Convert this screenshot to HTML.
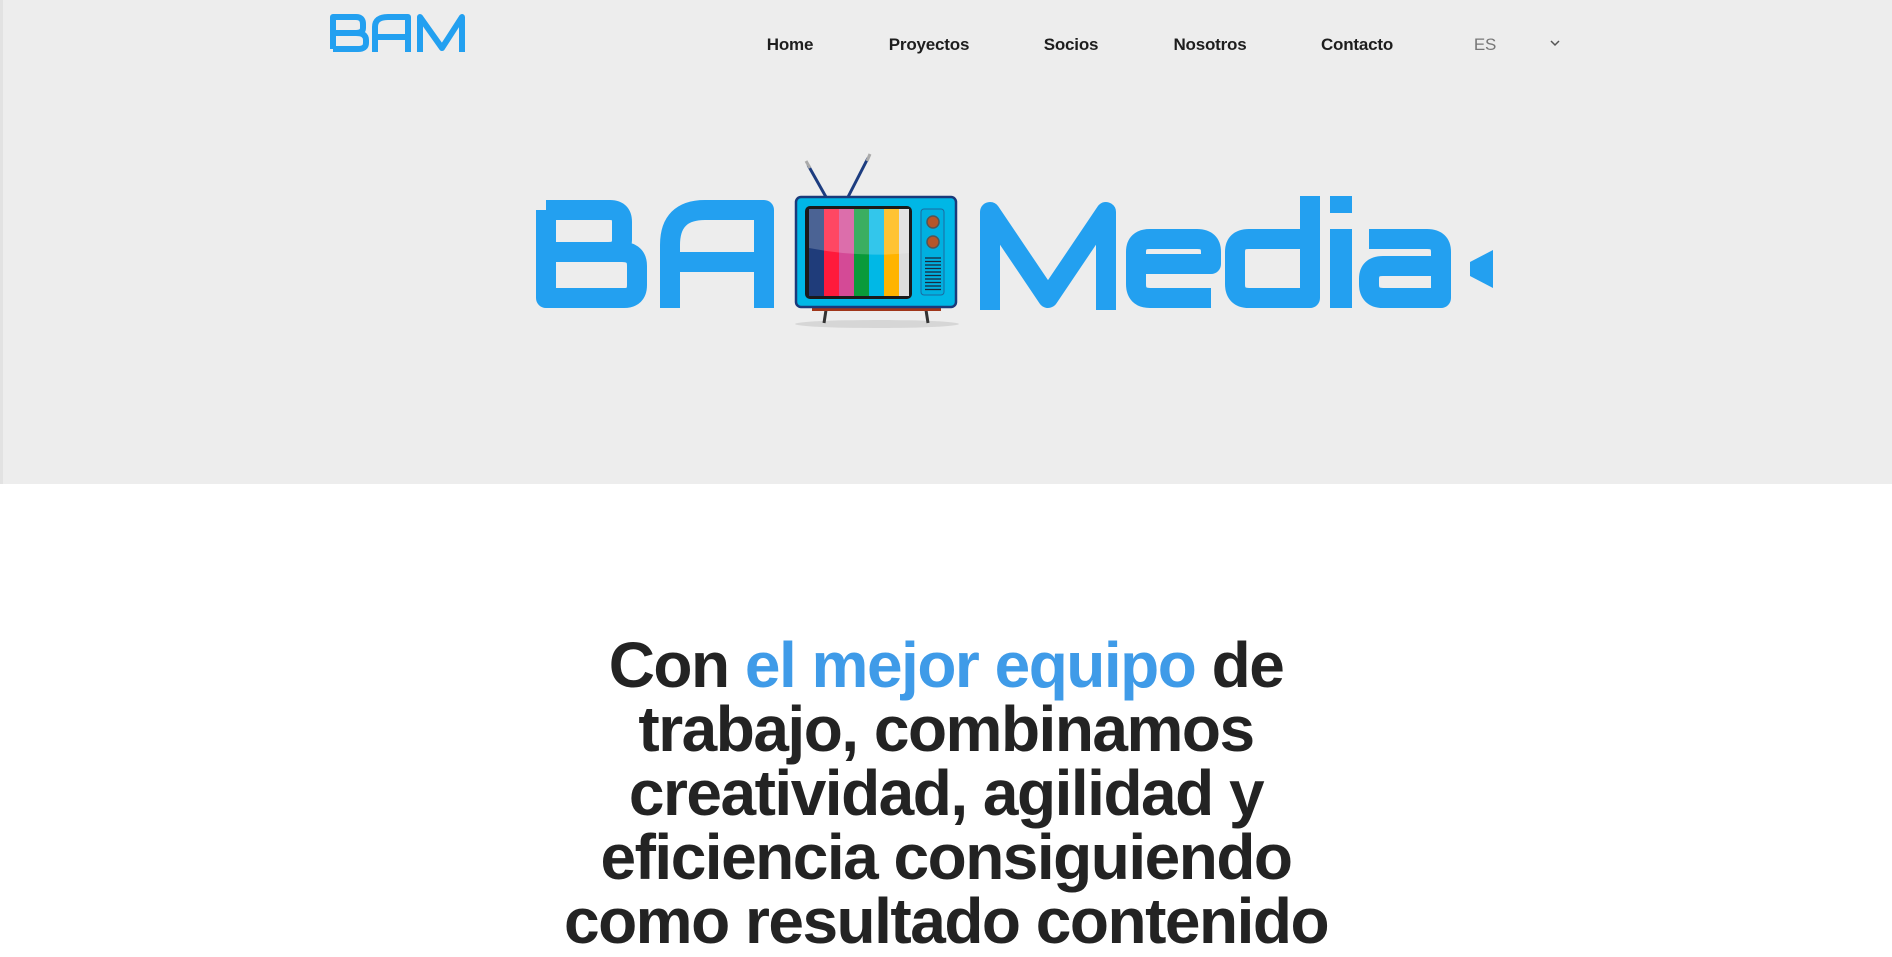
<!DOCTYPE html>
<html><head><meta charset="utf-8"><style>
html,body{margin:0;padding:0;width:1892px;height:951px;overflow:hidden;background:#fff;font-family:"Liberation Sans",sans-serif}
.hero{position:absolute;left:0;top:0;width:1892px;height:484px;background:#ededed;border-left:3px solid #e2e2e2;box-sizing:border-box}
.nav a{position:absolute;top:35px;font-size:17px;font-weight:bold;color:#1e1e1e;text-decoration:none;transform:translateX(-50%);letter-spacing:-0.2px}
h1{position:absolute;left:0;width:1892px;top:633px;margin:0;text-align:center;font-size:64px;line-height:64px;font-weight:bold;color:#232323;letter-spacing:-1.5px;white-space:nowrap}
h1 span{color:#3f9be8}
</style></head><body>
<div class="hero"></div>
<svg style="position:absolute;left:0;top:0" width="1892" height="951">
<g fill="none" stroke="#23a0f0" stroke-width="6" stroke-linejoin="round">
<path d="M333 49 V17 H356 Q363 17 363 24 V28 Q363 33 356 33 H333 M356 33 Q366 33 366 40 V43 Q366 49 358 49 H333"/>
<path d="M375 52 V27 Q375 17 388 17 H408 V52 M375 37 H408"/>
<path d="M420 52 V17 L442 48 L462 17 V52"/>
</g>
<g fill="none" stroke="#23a0f0" stroke-width="20" stroke-linejoin="round" stroke-linecap="butt">
<path d="M546 210 V298 H624 Q637 298 637 285 V266 Q637 252 622 252 H556 M546 210 H610 Q622 210 622 222 V240 Q622 252 608 252"/>
<path d="M670 308 V245 Q670 210 705 210 H764 V308 M670 262 H764"/>
<path d="M990 310 V212 L1048 298 L1106 212 V310"/>
<path d="M1211 298 H1150 Q1136 298 1136 284 V252 Q1136 239 1150 239 H1197 Q1211 239 1211 252 V264 H1142"/>
<path d="M1310 196 V298 H1249 Q1235 298 1235 284 V252 Q1235 239 1249 239 H1300"/>
<path d="M1369 239 H1427 Q1441 239 1441 252 V298 H1383 Q1369 298 1369 284 V279 Q1369 266 1383 266 H1441"/>
</g>
<rect x="1330" y="229" width="22" height="79" fill="#23a0f0"/>
<rect x="1330" y="196" width="22" height="17" fill="#23a0f0"/>
<polygon points="1493,250 1493,288 1470,276 1470,262" fill="#23a0f0"/>
<ellipse cx="877" cy="324" rx="82" ry="4" fill="#d6d6d6"/>
<line x1="826" y1="197" x2="808" y2="165" stroke="#1d3d80" stroke-width="3"/>
<line x1="848" y1="197" x2="868" y2="158" stroke="#1d3d80" stroke-width="3"/>
<line x1="810" y1="168" x2="806" y2="161" stroke="#aaa" stroke-width="3"/>
<line x1="867" y1="161" x2="870" y2="154" stroke="#aaa" stroke-width="3"/>
<line x1="826" y1="310" x2="824" y2="323" stroke="#333" stroke-width="3"/>
<line x1="926" y1="310" x2="928" y2="323" stroke="#333" stroke-width="3"/>
<rect x="812" y="307" width="129" height="4" fill="#a0361a"/>
<rect x="796" y="197" width="160" height="110" rx="5" fill="#00b7e6" stroke="#1b3a7a" stroke-width="2.5"/>
<rect x="805" y="206" width="107" height="93" rx="5" fill="#1a1a1a"/>
<g>
<rect x="809" y="209" width="15" height="87" fill="#1f3c7a"/>
<rect x="824" y="209" width="15" height="87" fill="#ff1a3c"/>
<rect x="839" y="209" width="15" height="87" fill="#d44a96"/>
<rect x="854" y="209" width="15" height="87" fill="#0a9a3a"/>
<rect x="869" y="209" width="15" height="87" fill="#00b8e6"/>
<rect x="884" y="209" width="15" height="87" fill="#ffb400"/>
<rect x="899" y="209" width="10" height="87" fill="#ddd"/>
<path d="M809 209 H909 V253 Q860 258 809 248 Z" fill="#fff" opacity="0.2"/>
</g>
<rect x="921" y="209" width="23" height="86" rx="3" fill="#00b0e0" stroke="#1b6aa0" stroke-width="1"/>
<circle cx="933" cy="222" r="6" fill="#b5562a" stroke="#555" stroke-width="1.5"/>
<circle cx="933" cy="242" r="6" fill="#b5562a" stroke="#555" stroke-width="1.5"/>
<g stroke="#1a2a40" stroke-width="1.3">
<line x1="925" y1="258" x2="941" y2="258"/><line x1="925" y1="261.5" x2="941" y2="261.5"/><line x1="925" y1="265" x2="941" y2="265"/><line x1="925" y1="268.5" x2="941" y2="268.5"/><line x1="925" y1="272" x2="941" y2="272"/><line x1="925" y1="275.5" x2="941" y2="275.5"/><line x1="925" y1="279" x2="941" y2="279"/><line x1="925" y1="282.5" x2="941" y2="282.5"/><line x1="925" y1="286" x2="941" y2="286"/><line x1="925" y1="289.5" x2="941" y2="289.5"/>
</g>
<path d="M1551 41 L1555 45 L1559 41" fill="none" stroke="#555" stroke-width="1.5"/>
</svg>
<div class="nav">
<a style="left:790px">Home</a>
<a style="left:929px">Proyectos</a>
<a style="left:1071px">Socios</a>
<a style="left:1210px">Nosotros</a>
<a style="left:1357px">Contacto</a>
<a style="left:1485px;font-weight:normal;color:#777">ES</a>
</div>
<h1>Con <span>el mejor equipo</span> de<br>trabajo, combinamos<br>creatividad, agilidad y<br>eficiencia consiguiendo<br>como resultado contenido</h1>
</body></html>
